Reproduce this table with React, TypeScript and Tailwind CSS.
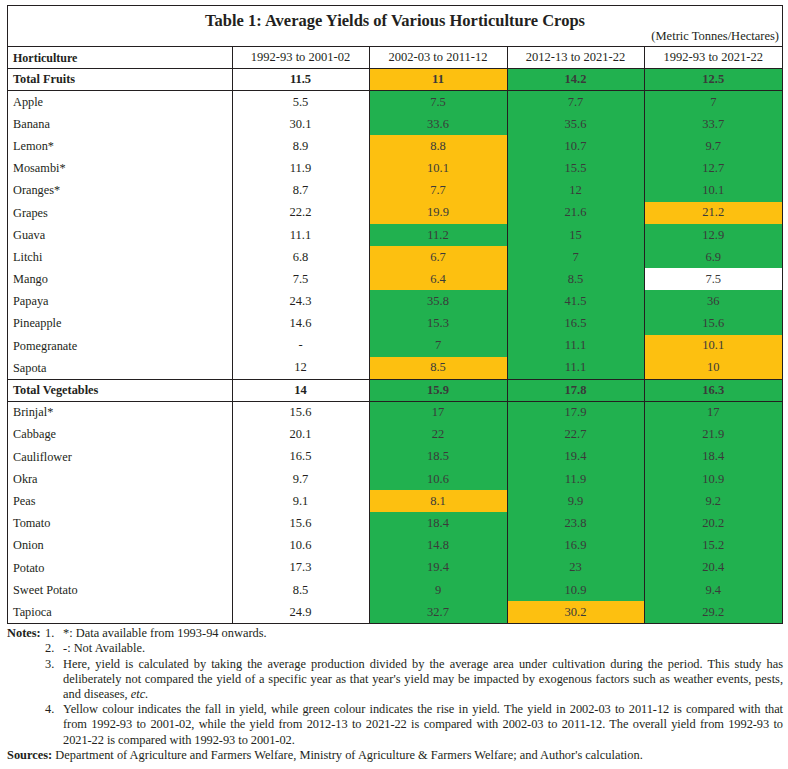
import React from "react";

type Tone = "g" | "y" | "w";

interface Row {
  name: string;
  base: string;
  vals: [string, string, string];
  tones: [Tone, Tone, Tone];
  total?: boolean;
}

const rows: Row[] = [
  { name: "Total Fruits", base: "11.5", vals: ["11", "14.2", "12.5"], tones: ["y", "g", "g"], total: true },
  { name: "Apple", base: "5.5", vals: ["7.5", "7.7", "7"], tones: ["g", "g", "g"] },
  { name: "Banana", base: "30.1", vals: ["33.6", "35.6", "33.7"], tones: ["g", "g", "g"] },
  { name: "Lemon*", base: "8.9", vals: ["8.8", "10.7", "9.7"], tones: ["y", "g", "g"] },
  { name: "Mosambi*", base: "11.9", vals: ["10.1", "15.5", "12.7"], tones: ["y", "g", "g"] },
  { name: "Oranges*", base: "8.7", vals: ["7.7", "12", "10.1"], tones: ["y", "g", "g"] },
  { name: "Grapes", base: "22.2", vals: ["19.9", "21.6", "21.2"], tones: ["y", "g", "y"] },
  { name: "Guava", base: "11.1", vals: ["11.2", "15", "12.9"], tones: ["g", "g", "g"] },
  { name: "Litchi", base: "6.8", vals: ["6.7", "7", "6.9"], tones: ["y", "g", "g"] },
  { name: "Mango", base: "7.5", vals: ["6.4", "8.5", "7.5"], tones: ["y", "g", "w"] },
  { name: "Papaya", base: "24.3", vals: ["35.8", "41.5", "36"], tones: ["g", "g", "g"] },
  { name: "Pineapple", base: "14.6", vals: ["15.3", "16.5", "15.6"], tones: ["g", "g", "g"] },
  { name: "Pomegranate", base: "-", vals: ["7", "11.1", "10.1"], tones: ["g", "g", "y"] },
  { name: "Sapota", base: "12", vals: ["8.5", "11.1", "10"], tones: ["y", "g", "y"] },
  { name: "Total Vegetables", base: "14", vals: ["15.9", "17.8", "16.3"], tones: ["g", "g", "g"], total: true },
  { name: "Brinjal*", base: "15.6", vals: ["17", "17.9", "17"], tones: ["g", "g", "g"] },
  { name: "Cabbage", base: "20.1", vals: ["22", "22.7", "21.9"], tones: ["g", "g", "g"] },
  { name: "Cauliflower", base: "16.5", vals: ["18.5", "19.4", "18.4"], tones: ["g", "g", "g"] },
  { name: "Okra", base: "9.7", vals: ["10.6", "11.9", "10.9"], tones: ["g", "g", "g"] },
  { name: "Peas", base: "9.1", vals: ["8.1", "9.9", "9.2"], tones: ["y", "g", "g"] },
  { name: "Tomato", base: "15.6", vals: ["18.4", "23.8", "20.2"], tones: ["g", "g", "g"] },
  { name: "Onion", base: "10.6", vals: ["14.8", "16.9", "15.2"], tones: ["g", "g", "g"] },
  { name: "Potato", base: "17.3", vals: ["19.4", "23", "20.4"], tones: ["g", "g", "g"] },
  { name: "Sweet Potato", base: "8.5", vals: ["9", "10.9", "9.4"], tones: ["g", "g", "g"] },
  { name: "Tapioca", base: "24.9", vals: ["32.7", "30.2", "29.2"], tones: ["g", "y", "g"] },
];

const toneClass: Record<Tone, string> = {
  g: "bg-[#21b14f] text-[#3a3a3a]",
  y: "bg-[#fdc010] text-[#3a3a3a]",
  w: "bg-white text-[#3a3a3a]",
};

// rows that close a block get a rule under them
const ruled = new Set(["Total Fruits", "Sapota", "Total Vegetables"]);

export default function App() {
  return (
    <div className="bg-white w-[788px] h-[769px] pt-[5px] pl-[7px] text-[#231f20] font-['Liberation_Serif',serif]">
      <div className="w-[776px] border border-[#231f20]">
        <div className="h-[40px] relative">
          <div className="text-center pt-[5px] text-[16.5px] font-bold leading-[20px]">
            Table 1: Average Yields of Various Horticulture Crops
          </div>
          <div className="absolute right-[3px] top-[23px] text-[12.5px] leading-[14px]">(Metric Tonnes/Hectares)</div>
        </div>
        <table className="w-full table-fixed border-collapse text-[12.5px]">
          <colgroup>
            <col className="w-[224px]" />
            <col className="w-[137px]" />
            <col className="w-[138px]" />
            <col className="w-[137px]" />
            <col />
          </colgroup>
          <thead>
            <tr className="h-[22px] border-t border-b border-[#231f20]">
              <th className="text-left font-bold pl-[5px] text-[12px]">Horticulture</th>
              <th className="font-normal border-l border-[#231f20]">1992-93 to 2001-02</th>
              <th className="font-normal border-l border-[#231f20]">2002-03 to 2011-12</th>
              <th className="font-normal border-l border-[#231f20]">2012-13 to 2021-22</th>
              <th className="font-normal border-l border-[#231f20]">1992-93 to 2021-22</th>
            </tr>
          </thead>
          <tbody>
            {rows.map((r) => (
              <tr
                key={r.name}
                className={`h-[22.2px] ${ruled.has(r.name) ? "border-b border-[#231f20]" : ""} ${r.total ? "font-bold" : ""}`}
              >
                <td className="pl-[5px] p-0 text-[12.3px]">{r.name}</td>
                <td className="text-center border-l border-[#231f20] p-0">{r.base}</td>
                {r.vals.map((v, i) => (
                  <td key={i} className={`text-center border-l border-[#231f20] p-0 ${toneClass[r.tones[i]]}`}>
                    {v}
                  </td>
                ))}
              </tr>
            ))}
          </tbody>
        </table>
      </div>

      <div className="mt-[2px] text-[12.4px] leading-[15.2px] pr-[5px]">
        <div className="flex">
          <span className="w-[38px] shrink-0 font-bold">Notes:</span>
          <div className="flex-1">
            <div className="flex">
              <span className="w-[18px] shrink-0">1.</span>
              <span>*: Data available from 1993-94 onwards.</span>
            </div>
            <div className="flex">
              <span className="w-[18px] shrink-0">2.</span>
              <span>-: Not Available.</span>
            </div>
            <div className="flex">
              <span className="w-[18px] shrink-0">3.</span>
              <p className="text-justify">
                Here, yield is calculated by taking the average production divided by the average area under cultivation
                during the period. This study has deliberately not compared the yield of a specific year as that year's
                yield may be impacted by exogenous factors such as weather events, pests, and diseases, <i>etc.</i>
              </p>
            </div>
            <div className="flex">
              <span className="w-[18px] shrink-0">4.</span>
              <p className="text-justify tracking-[-0.06px]">
                Yellow colour indicates the fall in yield, while green colour indicates the rise in yield. The yield in
                2002-03 to 2011-12 is compared with that <span className="whitespace-nowrap">from 1992-93</span> to
                2001-02, while the yield from 2012-13 to 2021-22 is compared with 2002-03 to 2011-12. The overall yield
                from 1992-93 to 2021-22 is compared with 1992-93 to 2001-02.
              </p>
            </div>
          </div>
        </div>
        <div>
          <span className="font-bold">Sources:</span> Department of Agriculture and Farmers Welfare, Ministry of
          Agriculture &amp; Farmers Welfare; and Author's calculation.
        </div>
      </div>
    </div>
  );
}
